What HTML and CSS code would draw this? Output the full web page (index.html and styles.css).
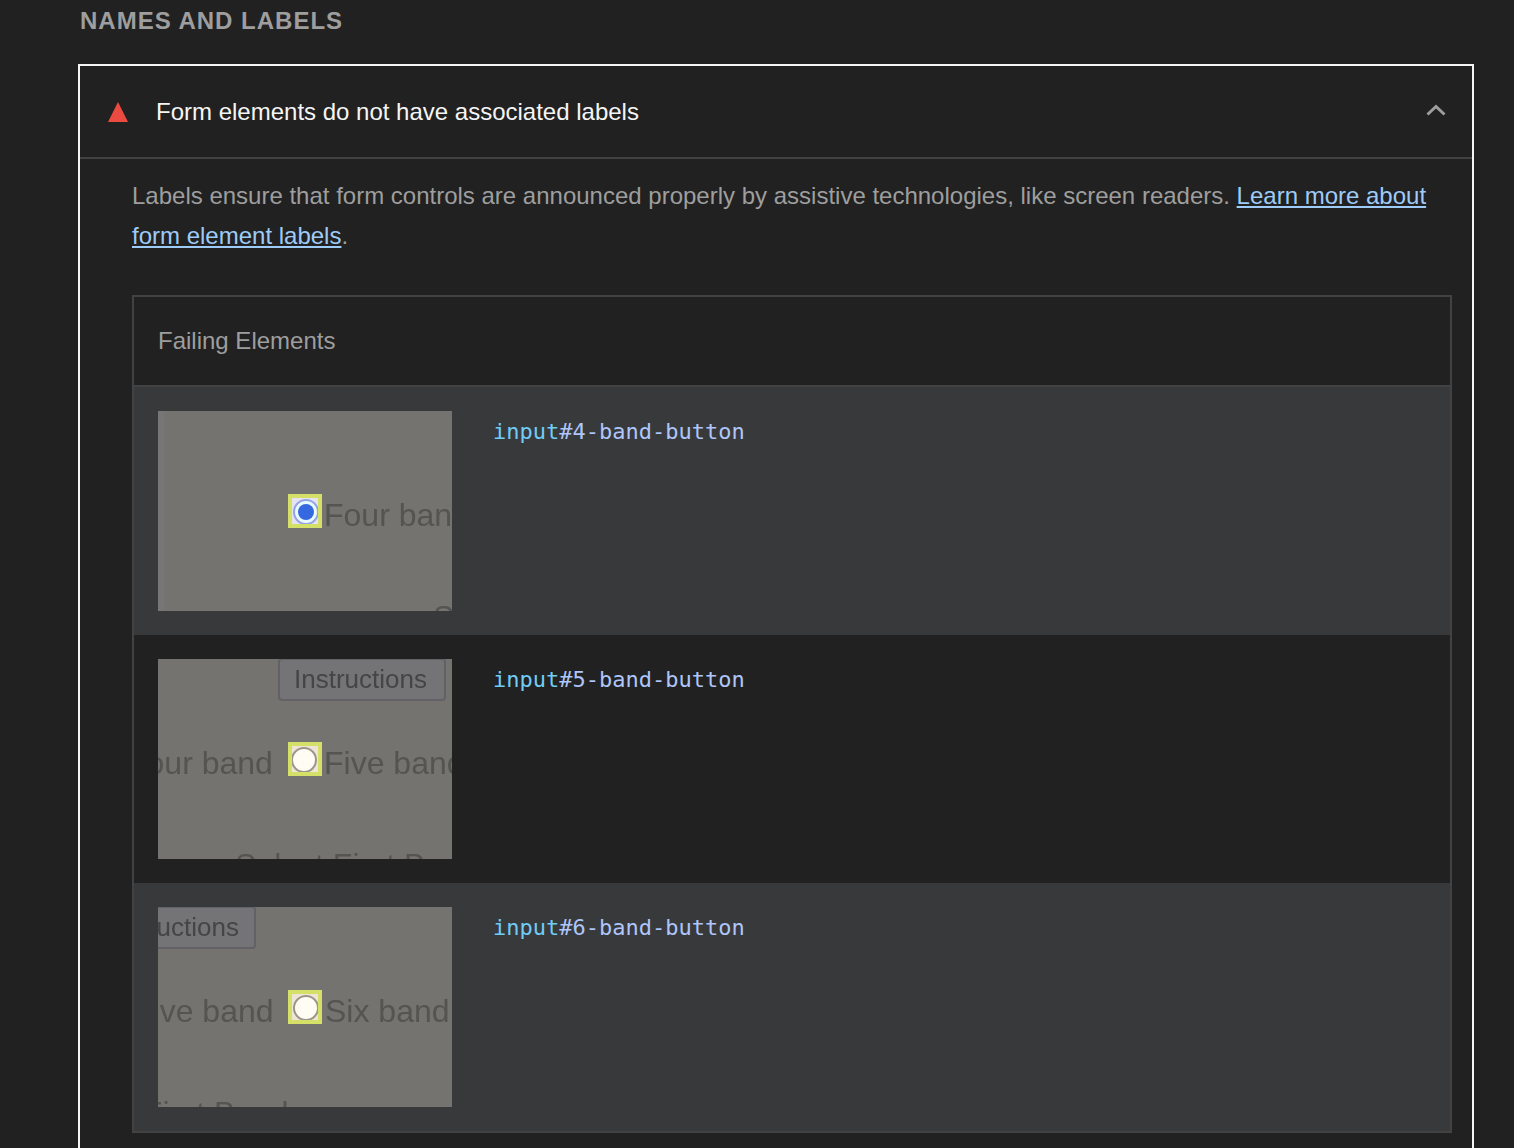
FILE: index.html
```html
<!DOCTYPE html>
<html lang="en">
<head>
<meta charset="utf-8">
<meta name="viewport" content="width=device-width, initial-scale=1">
<title>Names and labels</title>
<link rel="stylesheet" href="styles.css">
</head>
<body>
<main class="report">
  <h2 class="group-title">Names and labels</h2>
  <details class="audit" open>
    <summary class="audit-header">
      <svg class="fail-icon" viewBox="0 0 20 20" aria-hidden="true"><path d="M10 0L20 20H0z"/></svg>
      <span class="audit-title">Form elements do not have associated labels</span>
      <svg class="chevron" viewBox="0 0 20 16" aria-hidden="true"><path d="M1.500 10.500L10 2.500L18.500 10.500"/></svg>
    </summary>
    <div class="audit-body">
      <p class="description">Labels ensure that form controls are announced properly by assistive technologies, like screen readers. <a href="#labels">Learn more about form element labels</a>.</p>
      <table class="elements">
        <thead>
          <tr><th colspan="2" scope="col">Failing Elements</th></tr>
        </thead>
        <tbody>
          <tr>
            <td class="thumb-cell">
              <svg class="thumb" viewBox="0 0 294 200" role="img" aria-label="Four band radio button">
                <rect class="shot" width="294" height="200"/>
                <rect class="shot-edge" width="6" height="200"/>
                <g class="soft">
                  <text class="option" x="166" y="115">Four band</text>
                  <text class="option" x="275" y="217">Select</text>
                </g>
                <rect class="tint-violet" x="134" y="87" width="26" height="26"/>
                <g class="soft">
                  <circle class="ring-on" cx="148" cy="101" r="12"/>
                  <circle class="dot" cx="148" cy="101" r="8"/>
                </g>
                <rect class="spot" x="132" y="85" width="30" height="30"/>
              </svg>
            </td>
            <td class="node"><code><span class="tag">input</span>#4-band-button</code></td>
          </tr>
          <tr>
            <td class="thumb-cell">
              <svg class="thumb" viewBox="0 0 294 200" role="img" aria-label="Five band radio button">
                <rect class="shot" width="294" height="200"/>
                <g class="soft">
                  <rect class="shot-button" x="121" y="0" width="166" height="41" rx="3"/>
                  <text class="button-text" x="136" y="29">Instructions</text>
                  <text class="option" x="-31" y="115">Four band</text>
                  <text class="option" x="166" y="115">Five band</text>
                  <text class="option" x="77" y="217">Select First Band</text>
                </g>
                <rect class="tint-cream" x="134" y="87" width="26" height="26"/>
                <g class="soft"><circle class="ring-off" cx="146" cy="101" r="12"/></g>
                <rect class="spot" x="132" y="85" width="30" height="30"/>
              </svg>
            </td>
            <td class="node"><code><span class="tag">input</span>#5-band-button</code></td>
          </tr>
          <tr>
            <td class="thumb-cell">
              <svg class="thumb" viewBox="0 0 294 200" role="img" aria-label="Six band radio button">
                <rect class="shot" width="294" height="200"/>
                <g class="soft">
                  <rect class="shot-button" x="-69" y="0" width="166" height="41" rx="3"/>
                  <text class="button-text" x="-52" y="29">Instructions</text>
                  <text class="option" x="-25" y="115">Five band</text>
                  <text class="option" x="167" y="115">Six band</text>
                  <text class="option" x="-113" y="217">Select First Band</text>
                </g>
                <rect class="tint-cream" x="134" y="87" width="26" height="26"/>
                <g class="soft"><circle class="ring-off" cx="148" cy="101" r="12"/></g>
                <rect class="spot" x="132" y="85" width="30" height="30"/>
              </svg>
            </td>
            <td class="node"><code><span class="tag">input</span>#6-band-button</code></td>
          </tr>
        </tbody>
      </table>
    </div>
  </details>
</main>
</body>
</html>
```
FILE: styles.css
```css
* {
  box-sizing: border-box;
}

body {
  margin: 0;
  background: #212121;
  color: #9e9e9e;
  font: 24px/40px "Liberation Sans", Arial, sans-serif;
}

.report {
  display: flex;
  flex-direction: column;
  min-height: 100vh;
  padding: 1px 40px 0 78px;
}

.group-title {
  margin: 0 0 23px 2px;
  font-size: 24px;
  line-height: 40px;
  letter-spacing: 1px;
  text-transform: uppercase;
}

.audit {
  flex: 1;
  border: 2px solid #f5f5f5;
  border-bottom: 0;
}

.audit-header {
  display: flex;
  align-items: center;
  padding: 26px 26px 25px 28px;
  border-bottom: 2px solid #424242;
  list-style: none;
  cursor: pointer;
}

.audit-header::-webkit-details-marker {
  display: none;
}

.fail-icon {
  width: 20px;
  height: 20px;
  margin-right: 28px;
  fill: #eb4a40;
}

.audit-title {
  flex: 1;
  color: #f5f5f5;
}

.chevron {
  width: 20px;
  height: 16px;
  fill: none;
  stroke: #9e9e9e;
  stroke-width: 3;
}

.audit-body {
  padding: 17px 20px 0 52px;
}

.description {
  margin: 0 0 39px;
}

.description a {
  color: #9ecbf8;
  text-decoration-thickness: 2px;
  text-underline-offset: 2px;
}

.elements {
  width: 100%;
  border: 2px solid #424242;
  border-spacing: 0;
}

.elements th {
  padding: 24px;
  border-bottom: 2px solid #424242;
  font-weight: 400;
  text-align: left;
}

.elements tbody tr:nth-child(odd) {
  background: #38393b;
}

.elements td {
  padding: 24px;
  vertical-align: top;
}

.elements .thumb-cell {
  width: 335px;
  padding-right: 17px;
}

.thumb {
  display: block;
  width: 294px;
  height: 200px;
  overflow: hidden;
}

.elements .node {
  padding-top: 25px;
}

.node code {
  display: block;
  color: #aec6fa;
  font: 22px/40px "DejaVu Sans Mono", monospace;
}

.elements .node {
  padding-left: 24px;
}

.node .tag {
  color: #6fcdf5;
}

.soft {
  filter: blur(0.6px);
}

.shot {
  fill: #75736f;
}

.shot-edge {
  fill: #777575;
}

.shot-button {
  fill: #747376;
  stroke: #626165;
  stroke-width: 2;
}

.option {
  fill: #555451;
  font-size: 32px;
}

.button-text {
  fill: #454446;
  font-size: 26px;
}

.spot {
  fill: none;
  stroke: #d5e068;
  stroke-width: 4;
}

.tint-violet {
  fill: #e6e2f1;
}

.tint-cream {
  fill: #eee5d7;
}

.ring-on {
  fill: #eafaff;
  stroke: #92a5e5;
  stroke-width: 2;
}

.dot {
  fill: #3668df;
}

.ring-off {
  fill: #fffdf3;
  stroke: #9c9589;
  stroke-width: 2;
}
```
